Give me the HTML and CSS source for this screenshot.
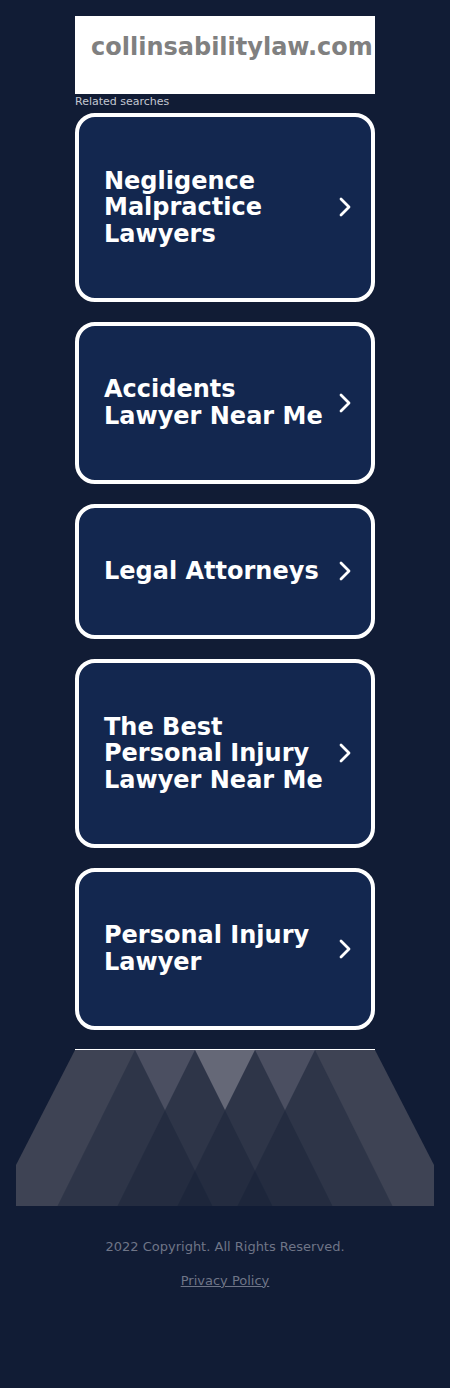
FILE: index.html
```html
<!DOCTYPE html>
<html lang="en">
<head>
  <meta charset="UTF-8">
  <title>collinsabilitylaw.com</title>
  <link rel="stylesheet" href="styles.css">
</head>
<body>

  <div class="wrap">
    <div class="domain">collinsabilitylaw.com</div>
    <div class="related">Related searches</div>

    <a class="card" href="#">
      <span class="card-text">Negligence Malpractice Lawyers</span>
      <svg class="chevron" viewBox="0 0 12 20"><polyline points="2,2 10,10 2,18"/></svg>
    </a>
    <a class="card" href="#">
      <span class="card-text">Accidents Lawyer Near Me</span>
      <svg class="chevron" viewBox="0 0 12 20"><polyline points="2,2 10,10 2,18"/></svg>
    </a>
    <a class="card" href="#">
      <span class="card-text">Legal Attorneys</span>
      <svg class="chevron" viewBox="0 0 12 20"><polyline points="2,2 10,10 2,18"/></svg>
    </a>
    <a class="card" href="#">
      <span class="card-text">The Best Personal Injury Lawyer Near Me</span>
      <svg class="chevron" viewBox="0 0 12 20"><polyline points="2,2 10,10 2,18"/></svg>
    </a>
    <a class="card" href="#">
      <span class="card-text">Personal Injury Lawyer</span>
      <svg class="chevron" viewBox="0 0 12 20"><polyline points="2,2 10,10 2,18"/></svg>
    </a>
  </div>

  <!-- mountains at the bottom: light base, dark translucent peaks on top -->
  <svg class="hills" width="418" height="157" viewBox="0 0 418 157">
    <rect x="59" y="0" width="300" height="1" fill="#ffffff"/>
    <polygon points="59,1 359,1 418,116 418,157 0,157 0,116" fill="#3e4354"/>
    <polygon points="119,1 179,1 149,61" fill="#4b4f61"/>
    <polygon points="179,1 239,1 209,61" fill="#656877"/>
    <polygon points="239,1 299,1 269,61" fill="#4b4f61"/>
    <g fill="#111c35" fill-opacity="0.35">
      <polygon points="119,1 196.5,157 41.5,157"/>
      <polygon points="179,1 256.5,157 101.5,157"/>
      <polygon points="239,1 316.5,157 161.5,157"/>
      <polygon points="299,1 376.5,157 221.5,157"/>
    </g>
  </svg>

  <div class="footer">
    <p>2022 Copyright. All Rights Reserved.</p>
    <a href="#">Privacy Policy</a>
  </div>

</body>
</html>
```

FILE: styles.css
```css
body {
  margin: 0;
  background-color: #111c35;
  font-family: "DejaVu Sans", sans-serif;
}
.wrap {
  width: 300px;
  margin: 0 auto;
  padding-top: 16px;
}
.domain {
  background-color: #ffffff;
  color: #808080;
  font-size: 24px;
  font-weight: bold;
  height: 78px;
  line-height: 62px;
  padding-left: 16px;
  white-space: nowrap;
}
.related {
  color: #c3c7d0;
  font-size: 11px;
  line-height: 14px;
  margin: 1px 0 4px;
}
.card {
  display: flex;
  align-items: center;
  gap: 8px;
  box-sizing: border-box;
  width: 300px;
  padding: 50.5px 20px 50.5px 25px;
  margin-bottom: 20px;
  background-color: #13274f;
  border: 4px solid #ffffff;
  border-radius: 20px;
  color: #ffffff;
  text-decoration: none;
}
.card:last-child {
  margin-bottom: 19px;
}
.card-text {
  flex: 1;
  font-size: 24px;
  font-weight: bold;
  line-height: 26.5px;
}
.chevron {
  width: 12px;
  height: 20px;
  flex-shrink: 0;
}
.chevron polyline {
  fill: none;
  stroke: #ffffff;
  stroke-width: 2.8;
  stroke-linecap: round;
  stroke-linejoin: round;
}
.hills {
  display: block;
  margin: 0 auto;
}
.footer {
  text-align: center;
  color: #6f7587;
  font-size: 13px;
  padding-top: 33px;
}
.footer p {
  margin: 0 0 19px;
}
.footer a {
  color: #6f7587;
}
```
